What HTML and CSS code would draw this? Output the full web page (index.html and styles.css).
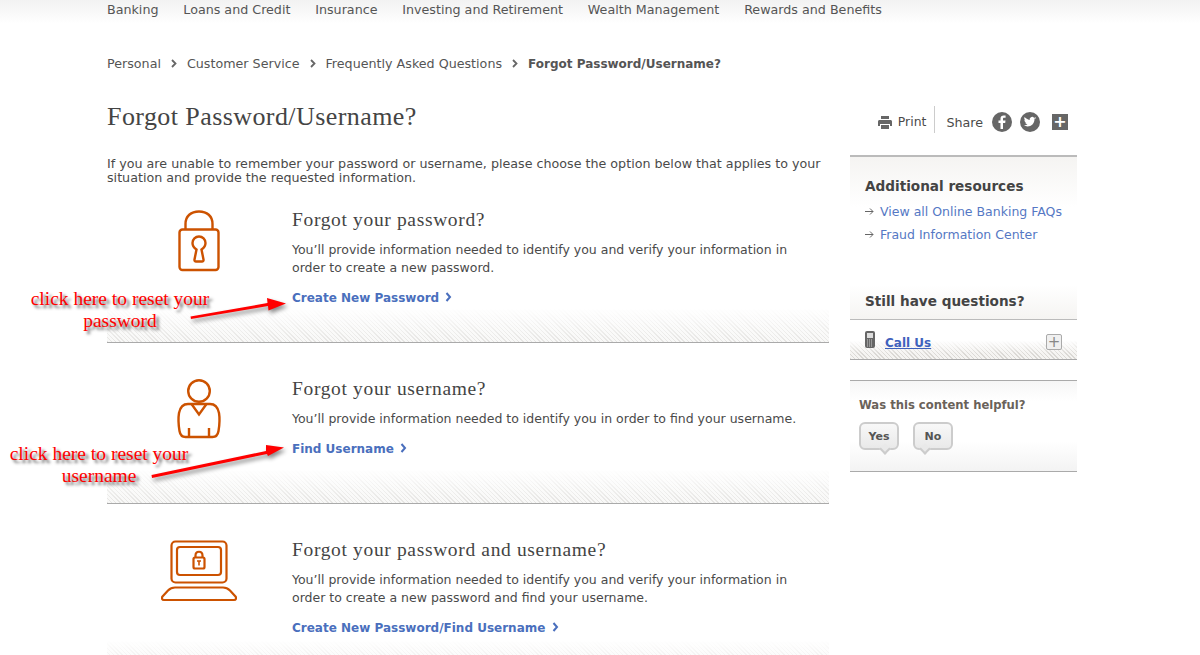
FILE: index.html
```html
<!DOCTYPE html>
<html lang="en">
<head>
    <meta charset="UTF-8">
    <meta name="viewport" content="width=device-width, initial-scale=1.0">
    <title>Forgot Password/Username?</title>
    <link rel="stylesheet" href="styles.css">
</head>
<body>
    <nav class="top-nav">
        <a href="#">Banking</a>
        <a href="#">Loans and Credit</a>
        <a href="#">Insurance</a>
        <a href="#">Investing and Retirement</a>
        <a href="#">Wealth Management</a>
        <a href="#">Rewards and Benefits</a>
    </nav>

    <div class="breadcrumb">
        <a href="#">Personal</a>
        <svg class="crumb-sep" width="6" height="9" viewBox="0 0 6 9"><path d="M1 1l3.500 3.500L1 8" fill="none" stroke="#666" stroke-width="1.800"/></svg>
        <a href="#">Customer Service</a>
        <svg class="crumb-sep" width="6" height="9" viewBox="0 0 6 9"><path d="M1 1l3.500 3.500L1 8" fill="none" stroke="#666" stroke-width="1.800"/></svg>
        <a href="#">Frequently Asked Questions</a>
        <svg class="crumb-sep" width="6" height="9" viewBox="0 0 6 9"><path d="M1 1l3.500 3.500L1 8" fill="none" stroke="#666" stroke-width="1.800"/></svg>
        <strong>Forgot Password/Username?</strong>
    </div>

    <div class="page">
        <main class="content">
            <h1>Forgot Password/Username?</h1>
            <p class="intro">If you are unable to remember your password or username, please choose the option below that applies to your situation and provide the requested information.</p>

            <section class="option option-password">
                <div class="option-icon">
                    <svg width="44" height="62" viewBox="0 0 44 62" fill="none" stroke="#cc5200" stroke-width="2.400">
                        <path d="M8.500 19.500V14C8.500 6 14 1.500 22 1.500S35.500 6 35.500 14v5.500"/>
                        <rect x="2.500" y="19.500" width="39" height="40.500" rx="3"/>
                        <path d="M19.500 39.500C17 38 15.500 36 15.500 33c0-3.600 2.900-6.500 6.500-6.500s6.500 2.900 6.500 6.500c0 3-1.500 5-4 6.500l2 10c.2 1.200-.5 2-1.500 2h-6c-1 0-1.700-.8-1.500-2z"/>
                    </svg>
                </div>
                <div class="option-body">
                    <h2>Forgot your password?</h2>
                    <p>You’ll provide information needed to identify you and verify your information in order to create a new password.</p>
                    <a class="option-link" href="#">Create New Password <svg width="7" height="10" viewBox="0 0 7 10"><path d="M1.500 1l3.500 4-3.500 4" fill="none" stroke="#4a6fbd" stroke-width="2"/></svg></a>
                </div>
            </section>

            <section class="option option-username">
                <div class="option-icon">
                    <svg width="46" height="60" viewBox="0 0 46 60" fill="none" stroke="#cc5200" stroke-width="2.400">
                        <circle cx="23" cy="12" r="10.800"/>
                        <path d="M12 25h22c5 0 8 4 9 9 1 6 .5 12-.5 18-.5 3-2.500 6-6 6h-27c-3.500 0-5.500-3-6-6-1-6-1.500-12-.5-18 1-5 4-9 9-9z"/>
                        <path d="M15.500 25L23 35.500 30.500 25M13 49v9M33 49v9"/>
                    </svg>
                </div>
                <div class="option-body">
                    <h2>Forgot your username?</h2>
                    <p>You’ll provide information needed to identify you in order to find your username.</p>
                    <a class="option-link" href="#">Find Username <svg width="7" height="10" viewBox="0 0 7 10"><path d="M1.500 1l3.500 4-3.500 4" fill="none" stroke="#4a6fbd" stroke-width="2"/></svg></a>
                </div>
            </section>

            <section class="option option-both">
                <div class="option-icon">
                    <svg width="76" height="62" viewBox="0 0 76 62" fill="none" stroke="#cc5200" stroke-width="2.200">
                        <rect x="10.500" y="1.500" width="55" height="41" rx="4"/>
                        <rect x="16" y="7" width="44" height="28" rx="3"/>
                        <path d="M34.500 17.500v-2c0-5 7-5 7 0v2"/>
                        <rect x="32.500" y="17.500" width="11" height="11" rx="1.500"/>
                        <path d="M38 20.500v5M36 21h4" stroke-width="1.600"/>
                        <path d="M14 47.500h48c3 0 5 1 7 3l5.500 6c1.200 1.500.5 3.500-1.500 3.500H3c-2 0-2.700-2-1.500-3.500l5.500-6c2-2 4-3 7-3z"/>
                    </svg>
                </div>
                <div class="option-body">
                    <h2>Forgot your password and username?</h2>
                    <p>You’ll provide information needed to identify you and verify your information in order to create a new password and find your username.</p>
                    <a class="option-link" href="#">Create New Password/Find Username <svg width="7" height="10" viewBox="0 0 7 10"><path d="M1.500 1l3.500 4-3.500 4" fill="none" stroke="#4a6fbd" stroke-width="2"/></svg></a>
                </div>
            </section>
        </main>

        <aside class="sidebar">
            <div class="tools">
                <svg width="14" height="13" viewBox="0 0 14 13" fill="#666"><path d="M3 0h8v3H3zM1.500 4h11c.8 0 1.500.7 1.500 1.500V10h-2V8H2v2H0V5.500C0 4.700.7 4 1.500 4zM3 9h8v4H3z"/></svg>
                <span class="print">Print</span>
                <span class="share">Share</span>
                <span class="round-icon">
                    <svg width="22" height="22" viewBox="0 0 22 22"><circle cx="11" cy="11" r="10" fill="#666"/><path d="M12 18v-6h2.200l.3-2.500H12V8c0-.8.2-1.200 1.200-1.200h1.400V4.600c-.3 0-1-.1-1.900-.1-2 0-3.200 1.200-3.200 3.200v1.800H7.500V12h2v6z" fill="#fff"/></svg>
                </span>
                <span class="round-icon">
                    <svg width="22" height="22" viewBox="0 0 22 22"><circle cx="11" cy="11" r="10" fill="#666"/><path d="M17 7.200c-.5.200-1 .4-1.500.4.500-.3.900-.8 1.100-1.400-.5.300-1 .5-1.600.6a2.500 2.500 0 0 0-4.300 2.300C8.600 8.500 6.800 7.600 5.600 6.100c-.7 1.200-.3 2.600.8 3.300-.4 0-.8-.1-1.100-.3 0 1.200.8 2.200 2 2.500-.4.100-.8.100-1.100 0 .3 1 1.200 1.700 2.300 1.700-1 .8-2.300 1.200-3.700 1 4.700 3 10.900-.1 10.700-6.600.5-.4.900-.8 1.500-1.500z" fill="#fff"/></svg>
                </span>
                <span class="square-plus">+</span>
            </div>

            <div class="resources">
                <h3>Additional resources</h3>
                <ul>
                    <li><svg width="9" height="7" viewBox="0 0 9 7"><path d="M0 3.500h8M5 .5l3 3-3 3" fill="none" stroke="#666"/></svg><a href="#">View all Online Banking FAQs</a></li>
                    <li><svg width="9" height="7" viewBox="0 0 9 7"><path d="M0 3.500h8M5 .5l3 3-3 3" fill="none" stroke="#666"/></svg><a href="#">Fraud Information Center</a></li>
                </ul>
            </div>

            <div class="questions">
                <h3>Still have questions?</h3>
                <div class="call-row">
                    <svg width="10" height="17" viewBox="0 0 10 17"><rect width="10" height="17" rx="2" fill="#666"/><rect x="2" y="2" width="6" height="5" fill="#ddd"/><path d="M2 9h6M2 11h6M2 13h6M2 15h6" stroke="#ccc" stroke-dasharray="1 1"/></svg>
                    <a href="#">Call Us</a>
                    <span class="expand">+</span>
                </div>
            </div>

            <div class="helpful">
                <h4>Was this content helpful?</h4>
                <div class="helpful-btns">
                    <button class="btn-yes">Yes</button>
                    <button class="btn-no">No</button>
                </div>
            </div>
        </aside>
    </div>

    <!-- red notes drawn on top of the page -->
    <div class="note note-password">click here to reset your<br>password</div>
    <div class="note note-username">click here to reset your<br>username</div>
    <svg class="note-arrows" width="300" height="500" viewBox="0 0 300 500">
        <path fill="#f00" d="M190.500 316.500L267.500 303 267 298 286 303.500 268.500 310.500 268 306 191 319z"/>
        <path fill="#f00" d="M151.500 475L266 451 266 445 284 447.500 268 456 267 454 152 478z"/>
    </svg>
</body>
</html>
```

FILE: styles.css
```css
/* styles.css */

body {
    margin: 0;
    height: 655px;
    overflow: hidden;
    position: relative;
    background-color: #fff;
    color: #4a4a4a;
    font-family: "DejaVu Sans", Verdana, sans-serif;
    font-size: 12.700px;
}

a {
    text-decoration: none;
}

/* top nav */
.top-nav {
    display: flex;
    gap: 24.800px;
    height: 24px;
    padding-left: 107px;
    background: linear-gradient(#f2f2f2, #fff);
    line-height: 19px;
}

.top-nav a {
    color: #555;
}

/* breadcrumb */
.breadcrumb {
    display: flex;
    align-items: center;
    gap: 10px;
    height: 16px;
    margin-top: 31px;
    padding-left: 107px;
}

.breadcrumb a {
    color: #555;
}

.breadcrumb strong {
    padding-top: 1px;
    color: #555;
    font-size: 12px;
}

.page {
    display: flex;
    gap: 21px;
    width: 970px;
    margin-left: 107px;
}

/* main column */
.content {
    width: 722px;
}

h1 {
    margin: 31px 0 0;
    font-family: "Liberation Serif", Georgia, serif;
    font-size: 26px;
    font-weight: normal;
    letter-spacing: .42px;
    line-height: 30px;
    color: #444;
}

.intro {
    margin: 25px 0 0;
    line-height: 14px;
}

.option {
    display: flex;
    box-sizing: border-box;
    border-bottom: 1px solid #aaa;
    position: relative;
}

.option::after {
    content: "";
    position: absolute;
    left: 0;
    right: 0;
    bottom: 0;
    height: 34px;
    background: repeating-linear-gradient(45deg, #e6e5e3 0 1px, #f8f8f7 1px 3px);
    -webkit-mask-image: linear-gradient(transparent, #000);
    mask-image: linear-gradient(transparent, #000);
}

.option-password {
    height: 142px;
    margin-top: 16px;
    padding-top: 7px;
}

.option-username {
    height: 161px;
    padding-top: 34px;
}

.option-both {
    height: 170px;
    padding-top: 34px;
    border-bottom: 0;
}

.option-icon {
    flex: none;
    box-sizing: border-box;
    width: 185px;
    display: flex;
    justify-content: center;
    align-items: flex-start;
    padding: 2px 2px 0 0;
}

.option-body {
    position: relative;
    z-index: 1;
}

h2 {
    margin: 0;
    font-family: "Liberation Serif", Georgia, serif;
    font-size: 19.500px;
    font-weight: normal;
    letter-spacing: .65px;
    line-height: 24px;
    color: #444;
}

.option-body p {
    width: 515px;
    margin: 9px 0 0;
    font-size: 12.500px;
    line-height: 18px;
}

.option-link {
    display: inline-block;
    margin-top: 12px;
    color: #4a6fbd;
    font-size: 12px;
    font-weight: bold;
    line-height: 18px;
}

.option-link svg {
    margin-left: 2px;
}

/* right column */
.sidebar {
    width: 227px;
}

.tools {
    display: flex;
    align-items: center;
    justify-content: flex-end;
    height: 32px;
    margin-top: 35px;
    padding-right: 9px;
}

.tools .print {
    height: 27px;
    margin: 0 0 5px 6px;
    padding-right: 8px;
    font-size: 12.400px;
    line-height: 32px;
    border-right: 1px solid #ccc;
}

.tools .share {
    margin-left: 11px;
    margin-right: 8px;
}

.round-icon {
    display: flex;
    margin-right: 6px;
}

.square-plus {
    width: 16px;
    height: 16px;
    margin-left: 5px;
    background-color: #666;
    color: #fff;
    font-size: 16px;
    font-weight: bold;
    line-height: 15px;
    text-align: center;
}

.resources {
    margin-top: 17px;
    padding: 20px 15px 0;
    height: 105px;
    border-top: 2px solid #bbb;
    background: linear-gradient(#f5f4f2, #fff 50px);
}

h3 {
    margin: 0;
    font-size: 13.600px;
    font-weight: bold;
    line-height: 18px;
    color: #444;
}

.resources ul {
    margin: 5px 0 0;
    padding: 0;
    list-style: none;
}

.resources li {
    display: flex;
    align-items: center;
    gap: 6px;
    height: 23px;
    font-size: 12.500px;
    line-height: 18px;
    white-space: nowrap;
}

.resources li svg {
    flex: none;
}

.resources a {
    color: #5578c4;
}

.questions {
    margin-top: 3px;
}

.questions h3 {
    height: 35px;
    padding: 7px 15px 0;
    box-sizing: border-box;
    background: linear-gradient(#fff, #f5f4f2);
    border-bottom: 1px solid #bbb;
}

.call-row {
    display: flex;
    align-items: center;
    gap: 10px;
    height: 39px;
    padding-left: 15px;
    border-bottom: 1px solid #aaa;
    position: relative;
    background: repeating-linear-gradient(45deg, #dbd9d5 0 1px, #f5f4f2 1px 3px);
}

.call-row::before {
    content: "";
    position: absolute;
    left: 0;
    right: 0;
    top: 0;
    height: 34px;
    background: linear-gradient(#fff 60%, rgba(255, 255, 255, 0));
}

.call-row svg,
.call-row a {
    position: relative;
}

.call-row svg {
    margin-top: -1px;
}

.call-row a {
    margin-top: 7px;
    color: #3f62bd;
    font-size: 12px;
    font-weight: bold;
    text-decoration: underline;
}

.expand {
    position: absolute;
    right: 15px;
    top: 14px;
    width: 14px;
    height: 14px;
    border: 1px solid #aaa;
    border-radius: 2px;
    background-color: #f0f0f0;
    color: #888;
    font-size: 15px;
    line-height: 14px;
    text-align: center;
}

.helpful {
    margin-top: 20px;
    height: 92px;
    padding: 16px 9px 0;
    box-sizing: border-box;
    border-top: 1px solid #aaa;
    border-bottom: 1px solid #aaa;
    background: linear-gradient(#f6f6f6, #fff 20px, #fff 60px, #f3f3f3);
}

h4 {
    margin: 0;
    font-size: 11.600px;
    font-weight: bold;
    line-height: 16px;
    color: #6a625a;
}

.helpful-btns {
    display: flex;
    gap: 14px;
    margin-top: 9px;
}

.helpful-btns button {
    position: relative;
    width: 40px;
    height: 28px;
    padding: 0;
    border: 2px solid #ccc;
    border-radius: 6px;
    background: linear-gradient(#f8f8f8, #e9e9e9);
    color: #555;
    font-family: inherit;
    font-size: 11px;
    font-weight: bold;
}

.helpful-btns button::after {
    content: "";
    position: absolute;
    bottom: -5px;
    width: 6px;
    height: 6px;
    background-color: #e9e9e9;
    border-right: 2px solid #ccc;
    border-bottom: 2px solid #ccc;
    transform: rotate(45deg);
}

.btn-yes::after {
    left: 20px;
}

.btn-no::after {
    left: 6px;
}

/* red notes on top */
.note {
    position: absolute;
    z-index: 5;
    width: 220px;
    color: #f00;
    font-family: "Liberation Serif", "Times New Roman", serif;
    font-size: 19.500px;
    line-height: 22px;
    text-align: center;
    text-shadow: 3px 3px 3px #666;
}

.note-password {
    left: 10px;
    top: 288px;
}

.note-username {
    left: -11px;
    top: 443px;
}

.note-arrows {
    position: absolute;
    z-index: 5;
    left: 0;
    top: 0;
    filter: drop-shadow(2px 3px 2px #888);
}
```
